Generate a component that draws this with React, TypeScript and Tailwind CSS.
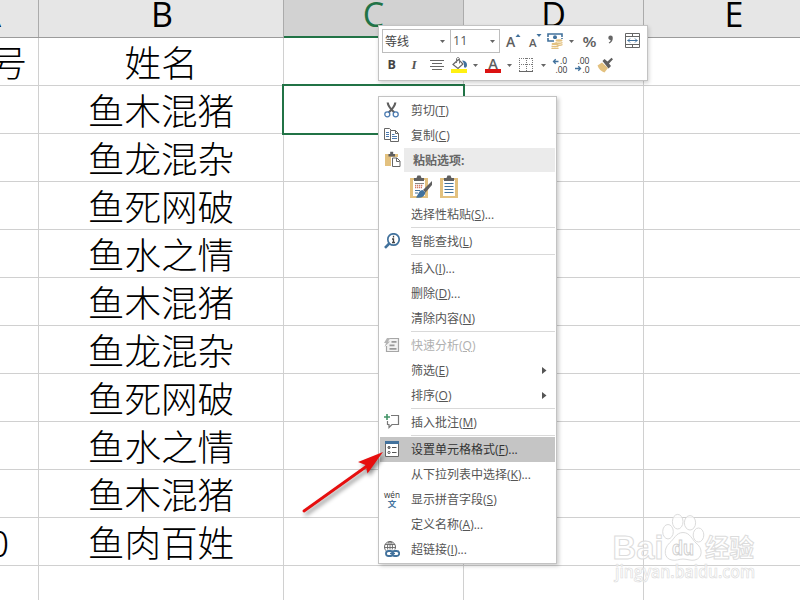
import type { ReactNode } from 'react';

const NAMES = [
  '鱼木混猪', '鱼龙混杂', '鱼死网破', '鱼水之情', '鱼木混猪',
  '鱼龙混杂', '鱼死网破', '鱼水之情', '鱼木混猪', '鱼肉百姓', ''
];

const SANS = '"Open Sans", "Noto Sans", sans-serif';

type Item = {
  label: string;
  mnemonic: string;
  dots?: boolean;
  icon?: ReactNode;
  disabled?: boolean;
  active?: boolean;
  submenu?: boolean;
};

function Icon({ children, w = 16, className = '' }: { children: ReactNode; w?: number; className?: string }) {
  return (
    <svg width={w} height="16" viewBox={`0 0 ${w} 16`} fill="none" className={'shrink-0 ' + className}>
      {children}
    </svg>
  );
}

function Caret({ className = '' }: { className?: string }) {
  return (
    <svg width="5" height="3" viewBox="0 0 5 3" className={'shrink-0 ' + className}>
      <path d="M0 0h5L2.5 3z" fill="#666" />
    </svg>
  );
}

const CutIcon = (
  <Icon>
    <path d="M3.700.5C4 4 6 6.500 10.300 10.500M11.300.5C11 4 9 6.500 4.700 10.500" stroke="#5f5f5f" strokeWidth="2.200" />
    <circle cx="3.300" cy="12.300" r="2.500" fill="#fff" stroke="#4a7ab0" strokeWidth="1.300" />
    <circle cx="11.700" cy="12.300" r="2.500" fill="#fff" stroke="#4a7ab0" strokeWidth="1.300" />
  </Icon>
);

const CopyIcon = (
  <Icon>
    <path d="M.5 1.500h5l2.500 2.500v8.500H.5z" fill="#fff" stroke="#666" />
    <path d="M2 5.500h3M2 7.500h3M2 9.500h3" stroke="#4a7ab0" />
    <path d="M6.500 3.500h5l3 3v8h-8z" fill="#fff" stroke="#666" />
    <path d="M11.500 3.500v3h3" stroke="#666" />
    <path d="M8 7.500h2.500M8 9.500h5M8 11.500h5" stroke="#4a7ab0" />
  </Icon>
);

const PasteIcon = (
  <Icon>
    <path d="M0 3h13v12H0z" fill="#e3c17f" />
    <path d="M3.500 3h1.700V.8h3V3H10v2.500H3.500z" fill="#5f5f5f" />
    <path d="M6 6h9v10H6z" fill="#fff" />
    <path d="M7.500 7h4.500l3 3v5.500H7.500z" fill="#fff" stroke="#666" />
    <path d="M11.500 7v3.500h3" stroke="#666" />
  </Icon>
);

const LookupIcon = (
  <Icon>
    <circle cx="9.500" cy="6.500" r="5.700" fill="#fff" stroke="#41719c" strokeWidth="1.700" />
    <path d="M5.300 10.500 1 14.800" stroke="#41719c" strokeWidth="2.600" />
    <path d="M9.500 2.800v1.600M8 6h1.500v3.600M8 9.500h3" stroke="#444" strokeWidth="1.300" />
  </Icon>
);

const AnalysisIcon = (
  <Icon>
    <path d="M6 1.500h8.500v13h-12V9" fill="#f2f2f2" stroke="#a6a6a6" strokeWidth="1.200" />
    <path d="M3 1 0 6h2L.5 10 6 4.500H4L6.500 1z" fill="#b5b5b5" />
    <path d="M7.500 4.800h5M5.500 8.300h5M5.500 11.800h7" stroke="#999" strokeWidth="1.700" />
  </Icon>
);

const CommentIcon = (
  <Icon>
    <path d="M7 1.500h7.500v9H8l-3 3v-3H3.500V7" stroke="#777" strokeWidth="1.200" />
    <path d="M3 0v6M0 3h6" stroke="#439467" strokeWidth="1.600" />
  </Icon>
);

const FormatIcon = (
  <Icon>
    <path d="M1.500 1h13v14.500h-13z" fill="#fff" stroke="#666" />
    <path d="M1 0h14v3H1z" fill="#41719c" />
    <circle cx="5" cy="6.500" r="1.100" fill="#999" stroke="#555" />
    <circle cx="5" cy="11.500" r="1.100" stroke="#555" />
    <path d="M8 6.500h4.500M8 11.500h4.500" stroke="#555" />
  </Icon>
);

const PinyinIcon = (
  <Icon className="overflow-visible">
    <text x="0" y="7" textLength="16" lengthAdjust="spacingAndGlyphs" fontSize="9" fill="#333" fontFamily={SANS}>wén</text>
    <text x="8" y="16" textAnchor="middle" fontSize="8.500" fontWeight="700" fill="#41719c" fontFamily='"Noto Sans CJK SC", sans-serif'>文</text>
  </Icon>
);

const LinkIcon = (
  <Icon>
    <circle cx="6" cy="6" r="5.500" fill="#fff" stroke="#666" />
    <ellipse cx="6" cy="6" rx="2.500" ry="5.500" stroke="#666" strokeWidth=".9" />
    <path d="M1 3.500h10M.5 6.500h11M6 .5v9" stroke="#666" strokeWidth=".9" />
    <rect x="1" y="8.500" width="15" height="7.500" rx="3.500" fill="#fff" />
    <rect x="2" y="10" width="7" height="5" rx="2.500" stroke="#41719c" strokeWidth="1.800" />
    <rect x="8.200" y="10" width="7" height="5" rx="2.500" stroke="#41719c" strokeWidth="1.800" />
    <path d="M6 12.500h5" stroke="#41719c" strokeWidth="1.400" />
  </Icon>
);

// groups are divided by a hairline in the menu
const GROUPS: Item[][] = [
  [{ label: '选择性粘贴', mnemonic: 'S', dots: true }],
  [{ label: '智能查找', mnemonic: 'L', icon: LookupIcon }],
  [
    { label: '插入', mnemonic: 'I', dots: true },
    { label: '删除', mnemonic: 'D', dots: true },
    { label: '清除内容', mnemonic: 'N' }
  ],
  [
    { label: '快速分析', mnemonic: 'Q', icon: AnalysisIcon, disabled: true },
    { label: '筛选', mnemonic: 'E', submenu: true },
    { label: '排序', mnemonic: 'O', submenu: true }
  ],
  [{ label: '插入批注', mnemonic: 'M', icon: CommentIcon }],
  [
    { label: '设置单元格格式', mnemonic: 'F', dots: true, icon: FormatIcon, active: true },
    { label: '从下拉列表中选择', mnemonic: 'K', dots: true },
    { label: '显示拼音字段', mnemonic: 'S', icon: PinyinIcon },
    { label: '定义名称', mnemonic: 'A', dots: true },
    { label: '超链接', mnemonic: 'I', dots: true, icon: LinkIcon }
  ]
];

function MenuItem({ item }: { item: Item }) {
  return (
    <div
      className={
        'mx-px flex h-[25px] items-center pl-1 ' +
        (item.active ? 'bg-[#c5c5c5] text-[#333]' : item.disabled ? 'text-[#b0b0b0]' : 'text-[#555]')
      }
    >
      <div className="w-[27px] shrink-0 pb-px">{item.icon}</div>
      <span className="flex-1 whitespace-nowrap">
        {item.label}(<u className="underline-offset-1">{item.mnemonic}</u>){item.dots ? '...' : ''}
      </span>
      {item.submenu && (
        <svg width="5" height="8" viewBox="0 0 5 8" className="mr-2">
          <path d="M0 0v7l4.500-3.500z" fill="#555" />
        </svg>
      )}
    </div>
  );
}

function ContextMenu() {
  return (
    <div
      className="absolute left-[378px] top-[96px] w-[179px] border border-[#c3c3c3] bg-white py-px text-xs shadow-[2px_2px_4px_rgba(0,0,0,0.2)]"
      style={{ fontFamily: '"Open Sans", "Noto Sans CJK SC", sans-serif' }}
    >
      <MenuItem item={{ label: '剪切', mnemonic: 'T', icon: CutIcon }} />
      <MenuItem item={{ label: '复制', mnemonic: 'C', icon: CopyIcon }} />

      {/* Paste options */}
      <div className="mr-px flex h-6 items-center">
        <div className="w-[25px] shrink-0 pb-0.5 pl-[6px]">{PasteIcon}</div>
        <div className="flex h-6 flex-1 items-center bg-[#ebebeb] pl-[9px] pt-px font-bold text-[#666]">粘贴选项:</div>
      </div>
      <div className="flex h-[30px] items-center gap-[8px] pl-[31px]">
        <svg width="22" height="24" viewBox="0 0 22 24" fill="none">
          <path d="M0 3h18v20H0z" fill="#e3c17f" />
          <path d="M3 5h12v16H3z" fill="#fff" />
          <path d="M4 3h2.500l1-2.500h3l1 2.500H14v3H4z" fill="#5f5f5f" />
          <path d="M5 8.500h9" stroke="#888" />
          <path d="M5 10.500h8M5 12.500h7" stroke="#d07a68" strokeWidth="1.300" strokeDasharray="1.300 .7" />
          <path d="M5 15.500h5M5 18h3" stroke="#41719c" />
          <path d="m22 6-9 9 2.500 2.500L22 10z" fill="#5f5f5f" />
          <path d="M12.500 15c-3 0-3.500 3-6.500 7.500 5 1 8.500-.5 9.500-5z" fill="#41719c" />
        </svg>
        <svg width="19" height="24" viewBox="0 0 19 24" fill="none">
          <path d="M0 3h18v20H0z" fill="#e3c17f" />
          <path d="M3 5h12v16H3z" fill="#fff" />
          <path d="M4 3h2.500l1-2.500h3l1 2.500H14v3H4z" fill="#5f5f5f" />
          <path d="M4.500 8.500h9M4.500 11.500h9M4.500 14.500h9M4.500 17.500h9" stroke="#41719c" />
        </svg>
      </div>

      {GROUPS.map((group, i) => (
        <div key={i}>
          {i > 0 && <div className="ml-8 mr-px h-0.5 border-t border-[#d9d9d9]" />}
          {group.map(item => (
            <MenuItem key={item.label} item={item} />
          ))}
        </div>
      ))}
    </div>
  );
}

function MiniToolbar() {
  return (
    <div
      className="absolute left-[378px] top-[25px] h-[56px] w-[270px] border border-[#c3c3c3] bg-white py-[3px] pl-[3px] text-[#555] shadow-[1px_2px_4px_rgba(0,0,0,0.18)]"
      style={{ fontFamily: '"Noto Sans CJK SC", sans-serif' }}
    >
      <div className="flex h-6 items-center">
        <div className="flex h-6 w-[69px] items-center justify-between border border-[#bdbdbd] pl-[2px] pr-[5px] text-xs text-[#444]">
          等线
          <Caret />
        </div>
        <div className="-ml-px flex h-6 w-[50px] items-center justify-between border border-[#bdbdbd] pl-[2px] pr-[4px] text-[#555]">
          <span className="text-[12.5px]" style={{ fontFamily: SANS }}>11</span>
          <Caret />
        </div>
        <Icon className="ml-[5px]">
          <text x="1" y="13.500" fontSize="14" fontWeight="600" fill="#5f5f5f" fontFamily={SANS}>A</text>
          <path d="M10.500 4 13 1l2.500 3z" fill="#41719c" />
        </Icon>
        <Icon className="ml-[7px]">
          <text x="1" y="13.500" fontSize="11.500" fontWeight="600" fill="#5f5f5f" fontFamily={SANS}>A</text>
          <path d="M8.500 1h5L11 4z" fill="#41719c" />
        </Icon>
        <Icon className="ml-[3px]">
          <path d="M1 1h14v7H1z" fill="#fff" stroke="#41719c" strokeWidth="1.600" />
          <path d="M0 4.500h2M14 4.500h2" stroke="#fff" strokeWidth="1.200" />
          <circle cx="8" cy="4.300" r="2" fill="#41719c" />
          <path d="M7 6h9v7h-3v3H4v-5h3z" fill="#fff" />
          <ellipse cx="12" cy="7.500" rx="3.500" ry="1.200" fill="#e3c17f" />
          <path d="M8.500 9.500c1.500 1 5.500 1 7 0M9.500 11.800c2 .6 4.500.6 6-.3M4.500 13c1.500 1 5.500 1 7 0M4.500 15c1.500 1 5.500 1 7 0" stroke="#e3c17f" strokeWidth="1.400" />
          <ellipse cx="8" cy="11" rx="3.500" ry="1.200" fill="#e3c17f" />
        </Icon>
        <Caret className="ml-1.5" />
        <Icon className="ml-2">
          <text x=".5" y="13.500" fontSize="15" fontWeight="600" fill="#5f5f5f" textLength="14" lengthAdjust="spacingAndGlyphs" fontFamily={SANS}>%</text>
        </Icon>
        <Icon w={12} className="ml-1.5">
          <path d="M4.300 4.700a2.200 2.200 0 1 1 4.500 0c0 3-1 4.700-3.500 5.800l-.6-.9c1.300-.8 1.900-1.600 1.900-2.700-1.400.1-2.300-.9-2.300-2.200z" fill="#666" />
        </Icon>
        <Icon className="ml-[9px]">
          <path d="M.5.5h14v14H.5zM.5 3.500h14M.5 11.500h14M7.500.5v3M7.500 11.500v3" stroke="#666" />
          <path d="M2.500 7.500h10M5 5.500l-2 2 2 2M10 5.500l2 2-2 2" stroke="#41719c" />
        </Icon>
      </div>

      <div className="flex h-6 items-center pl-0.5">
        <Icon>
          <text x="3.500" y="12" fontSize="12.500" fontWeight="700" fill="#444" fontFamily={SANS}>B</text>
        </Icon>
        <Icon className="ml-1.5">
          <text x="5.500" y="12" fontSize="13" fontWeight="700" fontStyle="italic" fill="#555" fontFamily='"Liberation Serif", serif'>I</text>
        </Icon>
        <Icon className="ml-[7px]">
          <path d="M1 3.500h14M3 6.500h10M1 9.500h14M3 12.500h10" stroke="#666" />
        </Icon>
        <Icon className="ml-1.5">
          <path d="M7.500 2.500 2 7.500l5 4 5-4.500z" fill="#fff" stroke="#666" strokeWidth="1.200" />
          <path d="M5.500 6V2c0-2 3-2 3 0v4.500" stroke="#777" />
          <path d="M11 3.500c3 0 5 1.500 5 4.500 0 2.500-2 3.500-3 2V6.500z" fill="#41719c" />
          <path d="M0 12h16v4H0z" fill="#fff112" />
        </Icon>
        <Caret className="ml-1.5" />
        <Icon className="ml-[7px] overflow-visible">
          <text x="8" y="11.500" textAnchor="middle" fontSize="14.500" fontWeight="600" fill="#5f5f5f" fontFamily={SANS}>A</text>
          <path d="M0 12h16v4H0z" fill="#dc1212" />
        </Icon>
        <Caret className="ml-1.5" />
        <Icon className="ml-1.5">
          <path d="M1 1.500h14M1 7.500h14M1.500 1v13M8.500 1v13M14.500 1v13" stroke="#777" strokeDasharray="1 1" />
          <path d="M1 14.500h14" stroke="#666" />
        </Icon>
        <Caret className="ml-[7px]" />
        <Icon className="ml-1.5 overflow-visible">
          <path d="M1.500 4.500h5M3.700 2.300 1.500 4.500l2.200 2.200" stroke="#41719c" strokeWidth="1.300" />
          <text x="8" y="7" fontSize="8.500" fill="#333" fontFamily={SANS}>.0</text>
          <text x="3.500" y="15.500" fontSize="8.500" fill="#333" fontFamily={SANS}>.00</text>
        </Icon>
        <Icon className="ml-[7px] overflow-visible">
          <text x="2.500" y="7" fontSize="8.500" fill="#333" fontFamily={SANS}>.00</text>
          <path d="M0 11.500h5.500M3.300 9.300l2.200 2.200-2.200 2.200" stroke="#41719c" strokeWidth="1.300" />
          <text x="7.500" y="15.500" fontSize="8.500" fill="#333" fontFamily={SANS}>.0</text>
        </Icon>
        <Icon className="ml-1.5">
          <path d="M.5 8.500 5 5.500l6 5.500-3.500 4.500c-3-1-6-3.500-7-7z" fill="#e3c17f" />
          <path d="m5.500 4 2-2 3 2.500L14.500.8 16 2.300l-4 4.200 2 2.500-2.500 2.500z" fill="#5f5f5f" />
        </Icon>
      </div>
    </div>
  );
}

function Watermark() {
  return (
    <svg className="absolute left-[608px] top-[508px]" width="160" height="80" viewBox="0 0 160 80">
      <g fill="#fff" fillOpacity=".7" stroke="#dcdcdc" strokeWidth="1">
        <text x="4.500" y="51" fontSize="33" fontWeight="700" textLength="51" lengthAdjust="spacingAndGlyphs" fontFamily='"Liberation Sans", sans-serif'>Bai</text>
        <ellipse cx="60" cy="23.700" rx="5.300" ry="7.200" />
        <ellipse cx="69.700" cy="13.700" rx="5.300" ry="7.300" />
        <ellipse cx="82" cy="14.800" rx="5.600" ry="7.200" />
        <ellipse cx="90.500" cy="27" rx="5.300" ry="7" />
        <path d="M75 24.500c7 0 9 7 13 10.500 7 5 7 15-1 17-4 1-8-1-12-1s-7 2-11 1c-8-1-9-11-2.500-17 4.500-3.500 6.500-10.500 13.500-10.500z" />
        <text x="64" y="47" fontSize="21" fontWeight="700" stroke="#cfcfcf" textLength="22" lengthAdjust="spacingAndGlyphs" fontFamily='"Liberation Sans", sans-serif'>du</text>
        <text x="97" y="49" fontSize="24.500" fontWeight="700" fontFamily='"Noto Sans CJK SC", sans-serif'>经验</text>
        <text x="7" y="69.500" fontSize="17.500" strokeWidth=".7" stroke="#dcdcdc" fontWeight="600" textLength="140" lengthAdjust="spacingAndGlyphs" fontFamily={SANS}>jingyan.baidu.com</text>
      </g>
    </svg>
  );
}

export default function App() {
  return (
    <main className="relative h-[600px] w-[800px] overflow-hidden bg-white text-black">
      {/* Column headers */}
      <div
        className="grid h-[38px] grid-cols-[39px_245px_180px_180px_180px] border-b border-[#9b9b9b] bg-[#e6e6e6] text-[34px] leading-[28px]"
        style={{ fontFamily: SANS }}
      >
        <div className="flex justify-end overflow-hidden border-r border-[#ababab] pr-[37px]">A</div>
        <div className="border-r border-[#ababab] pl-0.5 text-center">B</div>
        <div className="-mb-px border-b-2 border-r border-b-[#217346] border-r-[#ababab] bg-[#d2d2d2] text-center text-[#217346]">C</div>
        <div className="border-r border-[#ababab] text-center">D</div>
        <div className="text-center">E</div>
      </div>

      {/* Sheet rows */}
      <div
        className="text-[36.6px] font-light leading-[47px]"
        style={{ fontFamily: '"Noto Sans CJK SC", sans-serif' }}
      >
        {['姓名', ...NAMES].map((name, row) => (
          <div
            key={row}
            className="grid h-12 grid-cols-[39px_245px_180px_180px_180px] border-b border-[#d0d0d0]"
          >
            <div className="flex justify-end overflow-hidden border-r border-[#d0d0d0]">
              {row === 0 && <span className="pr-[11px]">号</span>}
              {row === 10 && <span className="pr-[29px]">0</span>}
            </div>
            <div className="border-r border-[#d0d0d0] text-center">{name}</div>
            <div className="relative border-r border-[#d0d0d0]">
              {row === 1 && <div className="absolute -inset-0.5 border-2 border-[#217346]" />}
            </div>
            <div className="border-r border-[#d0d0d0]" />
            <div />
          </div>
        ))}
      </div>

      <Watermark />
      <MiniToolbar />
      <ContextMenu />

      {/* Pointer arrow */}
      <svg
        className="absolute left-[296px] top-[444px] drop-shadow-[2px_3px_2px_rgba(0,0,0,0.45)]"
        width="96"
        height="76"
        viewBox="0 0 96 76"
      >
        <path d="M8 67 71 22" stroke="#e60f0f" strokeWidth="2.800" strokeLinecap="round" />
        <path d="M87 8 62 18l7.500 3 2 8.500z" fill="#e60f0f" />
      </svg>
    </main>
  );
}
